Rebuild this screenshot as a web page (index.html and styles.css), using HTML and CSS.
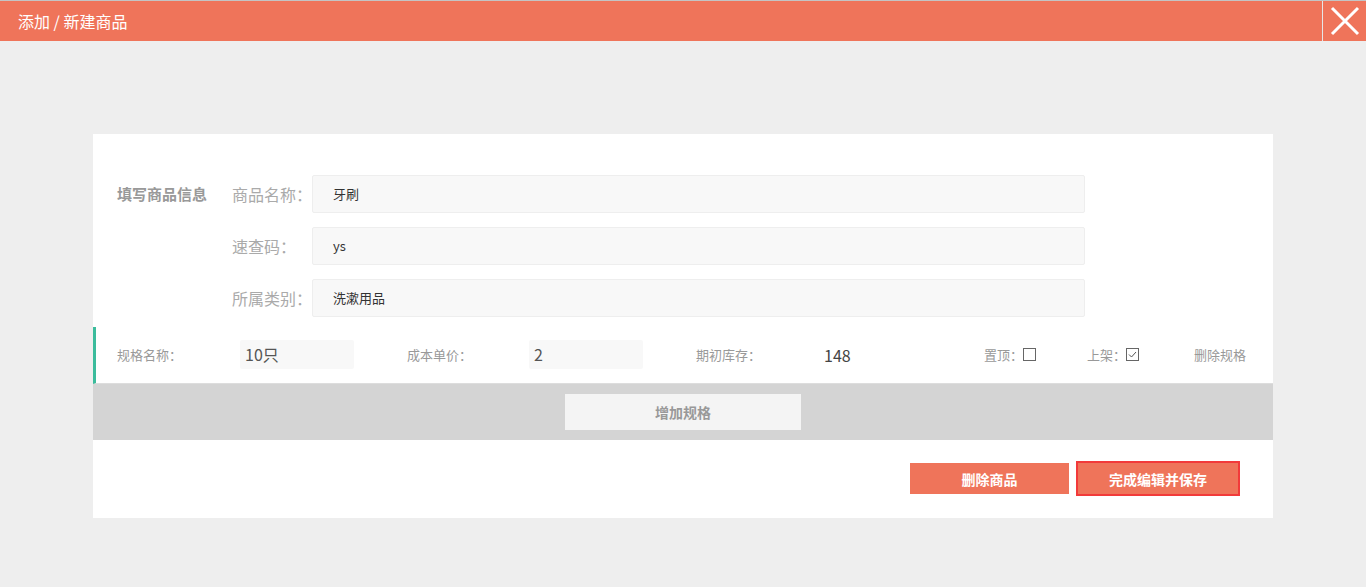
FILE: index.html
```html
<!DOCTYPE html>
<html lang="zh-CN">
<head>
<meta charset="utf-8">
<title>添加 / 新建商品</title>
<link rel="stylesheet" href="styles.css">
</head>
<body>
<header class="topbar">
  <div class="title">添加 / 新建商品</div>
  <button class="close" aria-label="关闭">
    <svg width="30" height="30" viewBox="0 0 30 30"><path d="M2 2 L28 28 M28 2 L2 28" stroke="#fff" stroke-width="3" fill="none"/></svg>
  </button>
</header>
<main class="stage">
  <section class="card">
    <div class="info">
      <div class="info-title">填写商品信息</div>
      <div class="fields">
        <div class="field">
          <label class="field-label">商品名称：</label>
          <div class="field-input">牙刷</div>
        </div>
        <div class="field">
          <label class="field-label">速查码：</label>
          <div class="field-input">ys</div>
        </div>
        <div class="field">
          <label class="field-label">所属类别：</label>
          <div class="field-input">洗漱用品</div>
        </div>
      </div>
    </div>
    <div class="spec">
      <span class="spec-label w1">规格名称：</span>
      <div class="spec-input">10只</div>
      <span class="spec-label w2 gap">成本单价：</span>
      <div class="spec-input">2</div>
      <span class="spec-label w3 gap">期初库存：</span>
      <span class="spec-value">148</span>
      <span class="spec-label chk-label">置顶：</span>
      <span class="checkbox"></span>
      <span class="spec-label chk-label gap2">上架：</span>
      <span class="checkbox checked"><svg width="11" height="11" viewBox="0 0 11 11"><path d="M2 5.5 L4.5 8 L9 3" stroke="#555" stroke-width="1" fill="none"/></svg></span>
      <span class="spec-label gap3">删除规格</span>
    </div>
    <div class="add-band">
      <button class="add-btn">增加规格</button>
    </div>
    <div class="footer">
      <button class="btn">删除商品</button>
      <button class="btn btn-save">完成编辑并保存</button>
    </div>
  </section>
</main>
</body>
</html>
```
FILE: styles.css
```css
* { box-sizing: border-box; }
html, body { margin: 0; padding: 0; }
body {
  background: #eeeeee;
  font-family: "Noto Sans CJK SC", "Liberation Sans", sans-serif;
  height: 587px;
  overflow: hidden;
}
.topbar {
  display: flex;
  align-items: stretch;
  height: 41px;
  border-top: 1px solid #c4c4c4;
  background: #ef745a;
}
.title {
  flex: 1;
  color: #fff;
  font-size: 16px;
  line-height: 40px;
  padding-left: 18px;
}
.close {
  width: 44px;
  border: none;
  border-left: 1px solid #e6e6e6;
  background: #ef745a;
  padding: 0;
  display: flex;
  align-items: center;
  justify-content: center;
  cursor: pointer;
}
.stage {
  padding: 93px 93px 0 93px;
}
.card {
  background: #fff;
  width: 1180px;
  height: 384px;
}
.info {
  display: flex;
  padding: 41px 0 0 24px;
}
.info-title {
  width: 115px;
  font-size: 15px;
  font-weight: bold;
  color: #999;
  line-height: 38px;
}
.fields {
  display: flex;
  flex-direction: column;
  gap: 14px;
}
.field {
  display: flex;
  align-items: center;
}
.field-label {
  width: 80px;
  font-size: 16px;
  color: #aaa;
}
.field-input {
  width: 773px;
  height: 38px;
  background: #f8f8f8;
  border: 1px solid #eeeeee;
  border-radius: 2px;
  padding-left: 20px;
  font-size: 13px;
  color: #333;
  line-height: 36px;
}
.spec {
  margin-top: 10px;
  height: 57px;
  display: flex;
  align-items: center;
  border-left: 3px solid #3bbc9c;
  border-bottom: 1px solid #dddddd;
  padding-left: 21px;
  padding-bottom: 1px;
}
.spec-label {
  font-size: 13px;
  color: #999;
  white-space: nowrap;
}
.w1 { width: 123px; }
.w2 { width: 122px; }
.w3 { width: 128px; }
.gap { margin-left: 53px; }
.spec-input {
  width: 114px;
  height: 29px;
  background: #f8f8f8;
  border-radius: 2px;
  font-size: 16px;
  color: #555;
  padding-left: 5px;
  line-height: 29px;
}
.spec-value {
  width: 160px;
  font-size: 16px;
  color: #444;
}
.chk-label { width: 39px; }
.checkbox {
  width: 13px;
  height: 13px;
  border: 1px solid #666;
  display: inline-flex;
  align-items: center;
  justify-content: center;
}
.gap2 { margin-left: 51px; }
.gap3 { margin-left: 55px; }
.add-band {
  height: 56px;
  background: #d4d4d4;
  display: flex;
  justify-content: center;
  align-items: center;
}
.add-btn {
  width: 236px;
  height: 36px;
  border: none;
  background: #f4f4f4;
  font-family: inherit;
  font-size: 14px;
  font-weight: bold;
  color: #999;
}
.footer {
  display: flex;
  justify-content: flex-end;
  gap: 7px;
  padding: 23px 33px 0 0;
}
.btn {
  width: 159px;
  height: 31px;
  border: none;
  background: #ef745a;
  color: #fff;
  font-family: inherit;
  font-size: 14px;
  font-weight: bold;
  padding: 0;
}
.btn-save {
  width: 164px;
  height: 35px;
  margin-top: -2px;
  border: 2px solid #f23a3a;
}
```
